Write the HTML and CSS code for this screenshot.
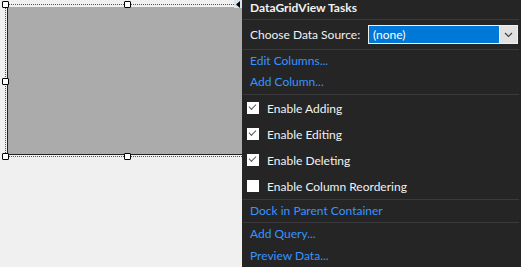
FILE: index.html
```html
<!DOCTYPE html>
<html lang="en">
<head>
    <meta charset="UTF-8">
    <title>DataGridView Tasks</title>
    <link rel="stylesheet" href="styles.css">
</head>
<body>
    <div class="canvas">
        <div class="grid-host">
            <div class="grid"></div>
            <span class="handle h-tl"></span>
            <span class="handle h-tm"></span>
            <span class="handle h-ml"></span>
            <span class="handle h-bl"></span>
            <span class="handle h-bm"></span>
            <span class="glyph">
                <svg width="5" height="7" viewBox="0 0 5 7"><path d="M4 0 L0 3.5 L4 7 Z" fill="#000"/></svg>
            </span>
        </div>
    </div>

    <div class="tasks">
        <div class="tasks-title">DataGridView Tasks</div>
        <div class="section source">
            <span class="label">Choose Data Source:</span>
            <div class="combo">
                <span class="combo-value">(none)</span>
                <span class="combo-btn">
                    <svg width="9" height="6" viewBox="0 0 9 6"><path d="M1 1 L4.5 4.5 L8 1" fill="none" stroke="#444" stroke-width="1.2"/></svg>
                </span>
            </div>
        </div>
        <div class="section links">
            <a class="link">Edit Columns...</a>
            <a class="link">Add Column...</a>
        </div>
        <div class="section checks">
            <label class="check"><span class="box on"></span>Enable Adding</label>
            <label class="check"><span class="box on"></span>Enable Editing</label>
            <label class="check"><span class="box on"></span>Enable Deleting</label>
            <label class="check"><span class="box"></span>Enable Column Reordering</label>
        </div>
        <div class="section dock">
            <a class="link">Dock in Parent Container</a>
        </div>
        <div class="section last">
            <a class="link">Add Query...</a>
            <a class="link">Preview Data...</a>
        </div>
    </div>
</body>
</html>
```

FILE: styles.css
```css
body {
    margin: 0;
    width: 521px;
    height: 267px;
    overflow: hidden;
    display: flex;
    background-color: #f0f0f0;
    font-family: Lato, "Noto Sans", sans-serif;
    font-size: 12px;
}

.canvas {
    width: 242px;
    flex: none;
}

.grid-host {
    position: relative;
    margin: 4px 0 0 5px;
    width: 237px;
    height: 153px;
    border-top: 1px dotted #555;
    border-left: 1px dotted #555;
    border-bottom: 1px dotted #555;
    box-sizing: border-box;
    padding: 2px 0 1px 1px;
}

.grid {
    height: 100%;
    background-color: #ababab;
    border-left: 1px solid #222;
    border-bottom: 1px solid #222;
    box-sizing: border-box;
}

.handle {
    position: absolute;
    width: 5px;
    height: 5px;
    background-color: #fff;
    border: 1px solid #000;
    border-radius: 1px;
}

.h-tl { left: -4px; top: -4px; }
.h-tm { left: 118px; top: -4px; }
.h-ml { left: -4px; top: 73px; }
.h-bl { left: -4px; bottom: -4px; }
.h-bm { left: 118px; bottom: -4px; }

.glyph {
    position: absolute;
    right: 0;
    top: -5px;
    width: 8px;
    height: 8px;
    background-color: #d8e4f0;
    display: flex;
    align-items: center;
    justify-content: center;
}

.tasks {
    flex: 1;
    background-color: #252526;
    color: #f1f1f1;
    display: flex;
    flex-direction: column;
    padding-left: 1px;
}

.tasks-title {
    height: 19px;
    line-height: 15px;
    padding-left: 7px;
    font-weight: bold;
    border-bottom: 1px solid #3a3a3c;
    margin-right: 2px;
}

.section {
    border-bottom: 1px solid #3a3a3c;
    margin-right: 2px;
    display: flex;
    flex-direction: column;
}

.source {
    height: 29px;
    flex-direction: row;
    align-items: center;
    padding-left: 7px;
}

.label {
    width: 118px;
}

.combo {
    width: 148px;
    height: 17px;
    border: 1px solid #f0f0f0;
    background-color: #0078d7;
    display: flex;
    color: #fff;
}

.combo-value {
    flex: 1;
    line-height: 17px;
    padding-left: 4px;
}

.combo-btn {
    width: 17px;
    background-color: #e1e1e1;
    border-left: 1px solid #f0f0f0;
    display: flex;
    align-items: center;
    justify-content: center;
}

.link {
    color: #3794ff;
    height: 21px;
    line-height: 21px;
    padding-left: 7px;
}

.links {
    padding-bottom: 2px;
}

.checks {
    height: 104px;
}

.check {
    height: 26px;
    display: flex;
    align-items: center;
    padding-left: 4px;
}

.box {
    width: 12px;
    height: 12px;
    background-color: #fff;
    margin-right: 8px;
    position: relative;
}

.box.on::after {
    content: "";
    position: absolute;
    left: 2px;
    top: 2px;
    width: 6px;
    height: 3px;
    border-left: 1.5px solid #555;
    border-bottom: 1.5px solid #555;
    transform: rotate(-45deg);
}

.dock .link,
.last .link {
    height: 22px;
    line-height: 22px;
}

.last {
    border-bottom: none;
}
```
